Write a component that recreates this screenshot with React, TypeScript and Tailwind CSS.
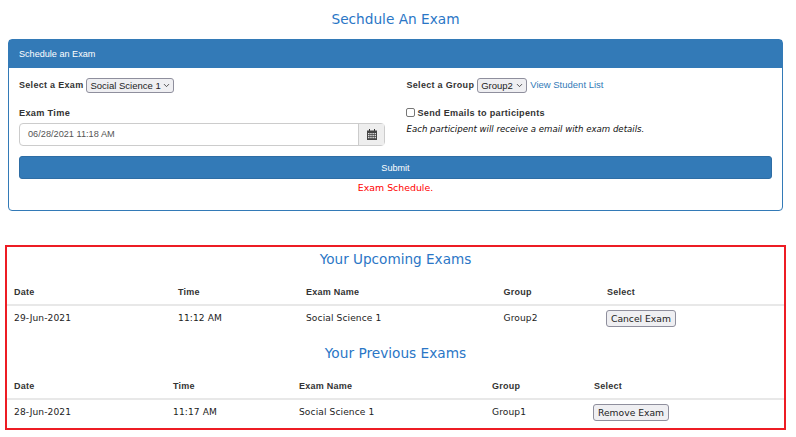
import { ChevronDown } from 'lucide-react';

type ExamRow = { date: string; time: string; name: string; group: string; action: string };

function ExamTable({ cols, row }: { cols: string; row: ExamRow }) {
  return (
    <div>
      <div className={`grid ${cols} h-[26px] items-center border-b-2 border-[#e8e8e8] pl-[7px] pt-[2px] text-[9px] font-bold text-[#333] font-['Liberation_Sans',sans-serif] tracking-[0.25px]`}>
        <span>Date</span>
        <span>Time</span>
        <span>Exam Name</span>
        <span>Group</span>
        <span>Select</span>
      </div>
      <div className={`grid ${cols} h-[28px] items-start pl-[7px] pt-[7px] text-[9.1px] leading-[11px] tracking-[0.1px] text-[#222] font-['DejaVu_Sans',sans-serif]`}>
        <span>{row.date}</span>
        <span>{row.time}</span>
        <span>{row.name}</span>
        <span>{row.group}</span>
        <span>
          <button className="-mt-[3px] ml-[-1px] block h-[17px] rounded-[3px] border border-[#8f8f9d] bg-[#efeff2] px-[4px] text-[9.2px] leading-none tracking-normal text-[#222]">
            {row.action}
          </button>
        </span>
      </div>
    </div>
  );
}

function SelectBox({ value, width }: { value: string; width: string }) {
  return (
    <span className={`relative inline-block h-[15px] ${width}`}>
      <select className="block h-[15px] w-full appearance-none rounded-[3px] border border-[#8f8f9d] bg-[#efeff2] pl-[3px] font-['Liberation_Sans',sans-serif] text-[9.5px] font-normal tracking-normal text-[#222]">
        <option>{value}</option>
      </select>
      <ChevronDown className="absolute right-[3px] top-[3px] h-[9px] w-[9px] text-[#333]" strokeWidth={2.2} />
    </span>
  );
}

export default function App() {
  return (
    <div className="h-[437px] w-[796px] overflow-hidden bg-white font-['DejaVu_Sans',sans-serif]">
      <h1 className="pr-[5px] pt-[10px] text-center text-[13.7px] leading-[18px] text-[#2a76c6] font-normal">Sechdule An Exam</h1>

      <div className="mx-2 mt-[11px] h-[172px] w-[775px] rounded-[4px] border border-[#337ab7]">
        <div className="flex h-[28px] items-center bg-[#337ab7] pl-[10px] pt-[2px] text-[9.1px] text-white font-['Liberation_Sans',sans-serif]">
          Schedule an Exam
        </div>

        <div className="px-[10px] pt-[10px]">
          <div className="grid grid-cols-[387.5px_1fr]">
            <div>
              <div className="flex h-[15px] items-center gap-[3px] text-[9px] font-bold text-[#333] font-['Liberation_Sans',sans-serif] tracking-[0.3px]">
                <span>Select a Exam</span>
                <SelectBox value="Social Science 1" width="w-[88px]" />
              </div>
              <div className="mt-[13px] text-[9.2px] leading-[14px] font-bold text-[#333] font-['Liberation_Sans',sans-serif] tracking-[0.3px]">Exam Time</div>
              <div className="mt-[3px] flex h-[23px] w-[366px] rounded-[4px] border border-[#ccc]">
                <div className="flex flex-1 items-center pl-[8px] text-[9.2px] text-[#555] font-['Liberation_Sans',sans-serif]">06/28/2021 11:18 AM</div>
                <div className="flex w-[26px] items-center justify-center border-l border-[#ccc] bg-[#eee]">
                  <svg width="10" height="11" viewBox="0 0 10 11">
                    <path d="M2 0h1v2H2zM7 0h1v2H7z" fill="#333" />
                    <path d="M0 1.5h10V11H0z" fill="#444" />
                    <path d="M1 4h1.5v1.2H1zM3.2 4h1.5v1.2H3.2zM5.4 4h1.5v1.2H5.4zM7.6 4h1.4v1.2H7.6zM1 6h1.5v1.2H1zM3.2 6h1.5v1.2H3.2zM5.4 6h1.5v1.2H5.4zM7.6 6h1.4v1.2H7.6zM1 8h1.5v1.2H1zM3.2 8h1.5v1.2H3.2zM5.4 8h1.5v1.2H5.4zM7.6 8h1.4v1.2H7.6z" fill="#ddd" />
                  </svg>
                </div>
              </div>
            </div>

            <div>
              <div className="flex h-[15px] items-center text-[9px] font-bold text-[#333] font-['Liberation_Sans',sans-serif] tracking-[0.3px]">
                <span>Select a Group</span>
                <span className="ml-[3px] flex"><SelectBox value="Group2" width="w-[50px]" /></span>
                <a className="ml-[3px] text-[9.5px] font-normal tracking-normal text-[#337ab7]">View Student List</a>
              </div>
              <div className="mt-[13px] flex h-[14px] items-center gap-[3px] pt-[1px] text-[9.1px] font-bold text-[#333] font-['Liberation_Sans',sans-serif] tracking-[0.3px]">
                <span className="-ml-px -mt-[2px] h-[9px] w-[9px] rounded-[2px] border border-[#767676] bg-white" />
                Send Emails to participents
              </div>
              <div className="mt-[4px] text-[8.6px] leading-[11px] italic text-[#111]">Each participent will receive a email with exam details.</div>
            </div>
          </div>

          <button className="mt-[10px] block h-[23px] w-[753px] rounded-[3px] border border-[#2e6da4] bg-[#337ab7] pt-[3px] text-[9.1px] text-white font-['Liberation_Sans',sans-serif]">
            Submit
          </button>
          <div className="mt-[3px] text-center text-[9.4px] leading-[12px] text-[#ff0000]">Exam Schedule.</div>
        </div>
      </div>

      <div className="ml-[5px] mt-[34px] h-[185px] w-[781px] border-2 border-[#ed1c24]">
        <h2 className="pt-[2px] text-center text-[13.6px] leading-[20px] text-[#2a76c6] font-normal">Your Upcoming Exams</h2>
        <div className="mt-[11px]">
          <ExamTable
            cols="grid-cols-[164px_128px_197.5px_103.5px_1fr]"
            row={{ date: '29-Jun-2021', time: '11:12 AM', name: 'Social Science 1', group: 'Group2', action: 'Cancel Exam' }}
          />
        </div>
        <h2 className="mt-[9px] text-center text-[13.7px] leading-[20px] text-[#2a76c6] font-normal">Your Previous Exams</h2>
        <div className="mt-[11px]">
          <ExamTable
            cols="grid-cols-[159px_126px_193px_102px_1fr]"
            row={{ date: '28-Jun-2021', time: '11:17 AM', name: 'Social Science 1', group: 'Group1', action: 'Remove Exam' }}
          />
        </div>
      </div>
    </div>
  );
}
